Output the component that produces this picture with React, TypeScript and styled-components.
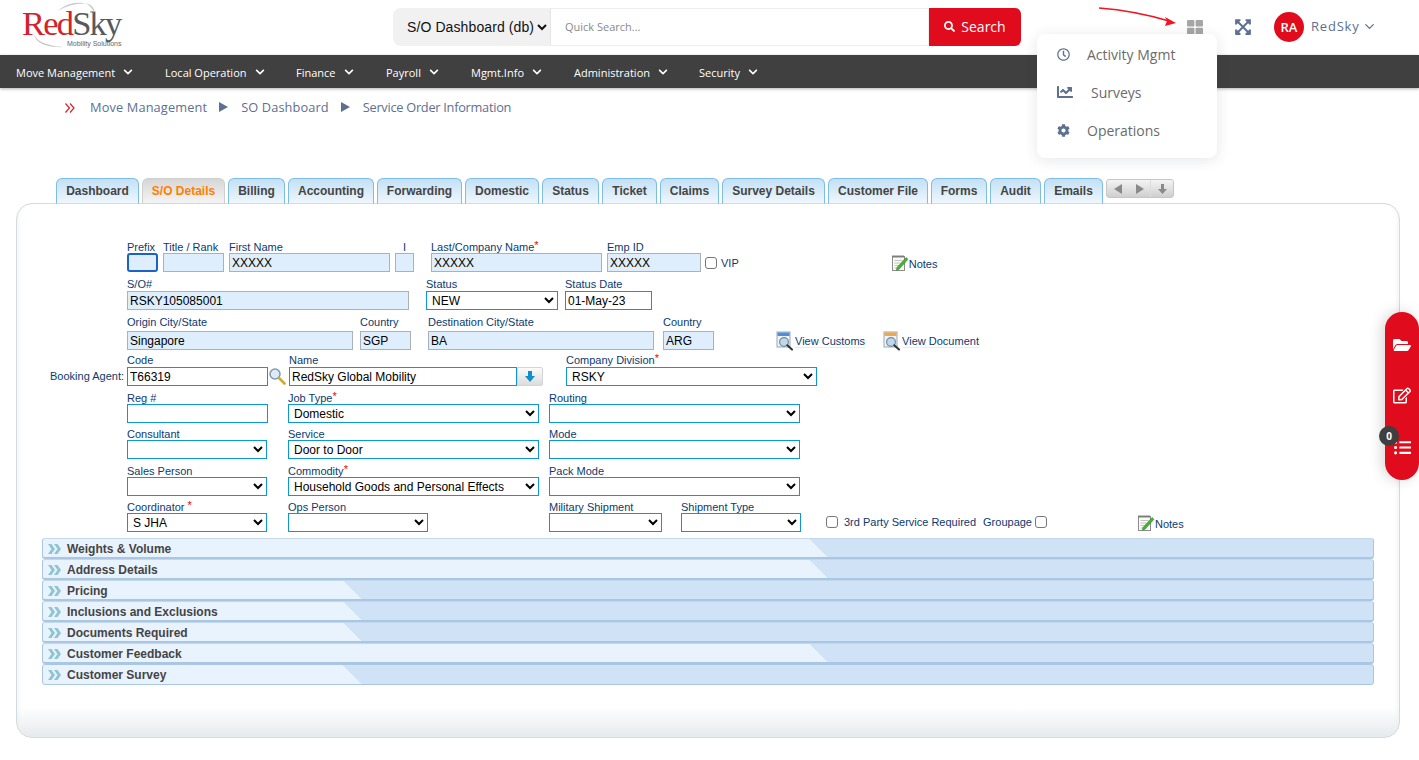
import React from 'react';
import styled, { createGlobalStyle } from 'styled-components';
import { FaChevronDown, FaChartLine, FaCog, FaExpandArrowsAlt, FaFolderOpen, FaListUl, FaRegClock, FaRegEdit, FaSearch } from 'react-icons/fa';
import { FiChevronDown } from 'react-icons/fi';

const Global = createGlobalStyle`
  html, body { margin: 0; padding: 0; background: #fff; }
  body { font-family: "Liberation Sans", Arial, sans-serif; overflow: hidden; }
  * { box-sizing: border-box; }
`;

const Page = styled.div`
  position: relative;
  width: 1419px;
  height: 760px;
  overflow: hidden;
  display: flex;
  flex-direction: column;
`;

/* ---------- header ---------- */
const Header = styled.header`
  height: 55px;
  display: flex;
  align-items: flex-start;
  flex: none;
`;
const Logo = styled.div`
  position: relative;
  width: 130px;
  height: 55px;
  margin-left: 22px;
  padding-top: 6px;
  flex: none;
`;
const LogoWord = styled.div`
  font-family: "Liberation Serif", "Times New Roman", serif;
  font-size: 34.5px;
  line-height: 34px;
  letter-spacing: -1.8px;
  color: #555a5e;
  white-space: nowrap;
`;
const LogoRed = styled.span`
  color: #d3222c;
`;
const LogoTag = styled.div`
  font-family: "Liberation Sans", sans-serif;
  font-size: 7px;
  line-height: 8px;
  color: #666;
  margin: 0 0 0 45px;
  white-space: nowrap;
`;
const Swoosh = styled.svg`
  position: absolute;
  left: -2px;
  top: 0;
`;
const SearchGroup = styled.form`
  display: flex;
  margin: 8px 0 0 241px;
  height: 38px;
  width: 628px;
  flex: none;
`;
const ScopeSelect = styled.select`
  width: 157px;
  height: 38px;
  border: none;
  border-radius: 8px 0 0 8px;
  background: #f1f1f1;
  font-family: "Liberation Sans", sans-serif;
  font-size: 14px;
  letter-spacing: 0.1px;
  color: #111;
  padding: 0 0 0 10px;
`;
const QuickInput = styled.input`
  width: 379px;
  height: 38px;
  border: 1px solid #eee;
  border-left: 1px solid #e4e4e4;
  padding: 0 0 2px 14px;
  font-family: "Open Sans", sans-serif;
  font-size: 11px;
  outline: none;
  &::placeholder { color: #8a8a8a; opacity: 1; }
`;
const SearchButton = styled.button`
  width: 92px;
  height: 38px;
  border: none;
  border-radius: 0 6px 6px 0;
  background: #e00b1c;
  color: #fff;
  display: flex;
  align-items: center;
  justify-content: center;
  gap: 6px;
  font-family: "Open Sans", sans-serif;
  font-size: 14px;
  font-weight: 500;
  padding: 0 0 1px;
`;
const HeaderRight = styled.div`
  display: flex;
  align-items: center;
  height: 30px;
  margin: 12px 0 0 166px;
  color: #5d7090;
`;
const GridIcon = styled.svg`
  margin-right: 31px;
  flex: none;
`;
const Avatar = styled.div`
  width: 30px;
  height: 30px;
  margin-left: 22px;
  border-radius: 50%;
  background: #e00b1c;
  color: #fff;
  font-family: "Open Sans", sans-serif;
  font-weight: 600;
  font-size: 13px;
  display: flex;
  align-items: center;
  justify-content: center;
`;
const UserName = styled.span`
  font-family: "Open Sans", sans-serif;
  font-size: 13px;
  letter-spacing: 0.8px;
  margin: 0 2px 0 7px;
  color: #5d7090;
  position: relative;
  top: -1px;
`;
const UserCaret = styled(FiChevronDown)`
  position: relative;
  top: -1px;
`;

const Menu = styled.div`
  position: absolute;
  left: 1037px;
  top: 34px;
  width: 180px;
  height: 124px;
  padding-top: 1px;
  border-radius: 8px;
  background: #fff;
  box-shadow: 0 2px 14px rgba(40, 50, 70, 0.12);
  z-index: 5;
`;
const MenuItem = styled.div<{ $gap: number }>`
  display: flex;
  align-items: center;
  height: 38px;
  padding-left: 20px;
  gap: ${(p) => p.$gap}px;
  color: #5d7090;
  font-family: "Open Sans", sans-serif;
  font-size: 14px;
`;
const MenuText = styled.span`
  color: #6b6b6b;
`;
const Arrow = styled.svg`
  position: absolute;
  left: 1095px;
  top: 3px;
  z-index: 6;
`;

/* ---------- nav ---------- */
const Nav = styled.nav`
  height: 33px;
  background: #404040;
  box-shadow: 0 1px 3px rgba(0, 0, 0, 0.3);
  display: flex;
  align-items: center;
  padding: 1px 0 0 16px;
  flex: none;
`;
const NavItem = styled.div<{ $w: number }>`
  width: ${(p) => p.$w}px;
  display: flex;
  align-items: center;
  gap: 8px;
  color: #fff;
  font-family: "Open Sans", sans-serif;
  font-size: 11px;
  font-weight: 500;
  white-space: nowrap;
`;

/* ---------- breadcrumb ---------- */
const Crumbs = styled.div`
  height: 90px;
  padding: 10px 0 0 65px;
  display: flex;
  align-items: flex-start;
  color: #5d7090;
  font-family: "Open Sans", sans-serif;
  font-size: 12.8px;
  line-height: 18px;
  flex: none;
`;
const Crumb = styled.span<{ $ls: number }>`
  letter-spacing: ${(p) => p.$ls}px;
  white-space: nowrap;
`;
const CrumbChevrons = styled.svg`
  margin: 5px 15px 0 0;
`;
const CrumbArrow = styled.svg`
  margin: 4px 13px 0 12px;
`;

/* ---------- tabs ---------- */
const TabBar = styled.div`
  display: flex;
  height: 26px;
  padding-left: 56px;
  gap: 3px;
  margin-bottom: -1px;
  position: relative;
  z-index: 1;
  flex: none;
`;
const Tab = styled.div<{ $w: number; $active?: boolean }>`
  width: ${(p) => p.$w}px;
  height: 26px;
  border: 1px solid ${(p) => (p.$active ? '#cfcfcf' : '#7dbde8')};
  border-bottom: 1px solid ${(p) => (p.$active ? '#d5d5d5' : '#d5dadd')};
  border-radius: 6px 6px 0 0;
  background: ${(p) =>
    p.$active
      ? 'linear-gradient(#d6d6d6, #f4f4f4)'
      : 'linear-gradient(#c3e0f5, #eff7fd)'};
  color: ${(p) => (p.$active ? '#ff7f00' : '#444')};
  font-size: 12px;
  font-weight: 700;
  display: flex;
  align-items: center;
  justify-content: center;
  white-space: nowrap;
`;
const TabArrows = styled.div`
  width: 68px;
  height: 19px;
  margin: 1px 0 0 0;
  border: 1px solid #c6c6c6;
  border-radius: 3px;
  background: linear-gradient(#f4f4f4, #cfcfcf);
  display: flex;
  align-items: center;
`;
const TabArrowCell = styled.div<{ $line?: boolean }>`
  flex: 1;
  height: 100%;
  display: flex;
  align-items: center;
  justify-content: center;
  border-left: ${(p) => (p.$line ? '1px solid #dcdcdc' : 'none')};
`;

/* ---------- panel ---------- */
const Panel = styled.main`
  width: 1384px;
  height: 535px;
  margin-left: 16px;
  padding-top: 37px;
  border: 1px solid #d5dadd;
  border-radius: 16px;
  background: linear-gradient(#fff calc(100% - 30px), #e6eaec 100%);
  box-shadow: inset 4px 0 4px -3px #eef0f1, inset -4px 0 4px -3px #eef0f1;
  flex: none;
`;
const Label = styled.label<{ $center?: boolean }>`
  display: block;
  font-size: 11px;
  line-height: 12px;
  color: #0b3a70;
  white-space: nowrap;
  text-align: ${(p) => (p.$center ? 'center' : 'left')};
`;
const Row = styled.div<{ $h: number; $lg?: number; $pl?: number }>`
  display: flex;
  align-items: flex-end;
  height: ${(p) => p.$h}px;
  padding-left: ${(p) => p.$pl ?? 110}px;
  ${Label} { margin-bottom: ${(p) => p.$lg ?? 0}px; }
`;
const Field = styled.div<{ $w: number; $ml?: number }>`
  width: ${(p) => p.$w}px;
  margin-left: ${(p) => p.$ml ?? 0}px;
  flex: none;
`;
const Star = styled.span`
  color: #e00;
  font-size: 11px;
  position: relative;
  top: -2px;
  line-height: 0;
`;
const Input = styled.input<{ $ro?: boolean; $focus?: boolean }>`
  display: block;
  width: 100%;
  height: 19px;
  padding: 0 2px;
  font-family: "Liberation Sans", sans-serif;
  font-size: 12px;
  color: #000;
  outline: none;
  background: ${(p) => (p.$ro ? '#deeefd' : '#fff')};
  border: ${(p) => (p.$focus ? '2px solid #1a62c8' : p.$ro ? '1px solid #a9b1b9' : '1px solid #0b99cf')};
  border-radius: ${(p) => (p.$focus ? '3px' : '0')};
`;
const Select = styled.select`
  display: block;
  width: 100%;
  height: 19px;
  padding: 0 1px;
  font-family: "Liberation Sans", sans-serif;
  font-size: 12px;
  color: #000;
  background: #fff;
  border: 1px solid #0b99cf;
  border-radius: 0;
  outline: none;
`;
const Inline = styled.div<{ $ml?: number; $mb?: number }>`
  display: flex;
  align-items: center;
  height: 19px;
  margin-left: ${(p) => p.$ml ?? 0}px;
  margin-bottom: ${(p) => p.$mb ?? 0}px;
  flex: none;
`;
const Check = styled.input.attrs({ type: 'checkbox' })<{ $ml?: number; $mr?: number }>`
  appearance: none;
  width: 12px;
  height: 12px;
  margin: 0 ${(p) => p.$mr ?? 0}px 0 ${(p) => p.$ml ?? 0}px;
  border: 1px solid #777;
  border-radius: 3px;
  background: #fff;
  flex: none;
`;
const Small = styled.span<{ $ml?: number }>`
  font-size: 11px;
  line-height: 12px;
  color: #0b3a70;
  margin-left: ${(p) => p.$ml ?? 0}px;
  white-space: nowrap;
`;
const NotesText = styled.span`
  font-size: 11px;
  line-height: 12px;
  color: #0b3a70;
  margin: 2px 0 0 0;
  white-space: nowrap;
`;
const IconLink = styled.span`
  font-size: 11px;
  line-height: 12px;
  color: #0b3a70;
  border-bottom: 1px solid #e6edf3;
  margin: 2px 0 0 1px;
  white-space: nowrap;
`;
const BookingLabel = styled.div`
  width: 77px;
  padding-right: 3px;
  height: 19px;
  line-height: 19px;
  font-size: 11px;
  color: #0b3a70;
  text-align: right;
  white-space: nowrap;
  flex: none;
`;
const Lookup = styled.svg`
  flex: none;
  margin-bottom: 1px;
`;
const DownButton = styled.div`
  width: 26px;
  height: 19px;
  flex: none;
  display: flex;
  align-items: center;
  justify-content: center;
  border: 1px solid #d4d4d4;
  border-radius: 0 2px 2px 0;
  background: linear-gradient(#fbfbfb, #dcdcdc);
`;
const Accordion = styled.section`
  width: 1332px;
  margin: 6px 0 0 25px;
`;
const Bar = styled.div<{ $cut: number; $last?: boolean }>`
  height: 21px;
  display: flex;
  align-items: center;
  gap: 6px;
  padding: ${(p) => (p.$last ? 0 : 1)}px 0 0 5px;
  border: 1px solid #a9c6e2;
  border-width: 1px 1px ${(p) => (p.$last ? 1 : 2)}px 1px;
  border-top-color: ${(p) => (p.$last ? '#a9c6e2' : '#c4d8ec')};
  border-radius: 3px;
  color: #444;
  font-size: 12px;
  font-weight: 700;
  background:
    linear-gradient(45deg, #e9f3fd 50%, #cfe2f6 50%) ${(p) => p.$cut}px 0 / 21px 100% no-repeat,
    linear-gradient(#cfe2f6, #cfe2f6) ${(p) => p.$cut + 21}px 0 / 100% 100% no-repeat,
    #e9f3fd;
`;

/* ---------- side rail ---------- */
const Rail = styled.aside`
  position: absolute;
  left: 1385px;
  top: 312px;
  width: 34px;
  height: 168px;
  border-radius: 17px;
  background: #e00b1c;
  color: #fff;
  box-shadow: -3px 0 14px rgba(0, 0, 0, 0.16);
  display: flex;
  flex-direction: column;
  align-items: center;
  padding: 24px 0 0 0;
  gap: 32px;
  z-index: 4;
`;
const RailIcon = styled.div<{ $mt?: number }>`
  width: 18px;
  height: 18px;
  margin-top: ${(p) => p.$mt ?? 0}px;
  display: flex;
  align-items: center;
  justify-content: center;
`;
const Badge = styled.div`
  position: absolute;
  left: -6px;
  top: 114px;
  width: 20px;
  height: 20px;
  border-radius: 50%;
  background: #3f3f3f;
  color: #fff;
  font-family: "Open Sans", sans-serif;
  font-size: 10px;
  font-weight: 700;
  display: flex;
  align-items: center;
  justify-content: center;
`;

/* ---------- drawn icons ---------- */
const NotesIcon = () => (
  <svg width="18" height="18" viewBox="0 0 18 18">
    <rect x="1.500" y="2.500" width="12" height="14" fill="#fbfbf4" stroke="#8c8c8c" />
    <path d="M2 1v3M4 1v3M6 1v3M8 1v3M10 1v3M12 1v3" stroke="#666" strokeWidth="0.8" />
    <path d="M3.500 6.500h8M3.500 9h6M3.500 11.500h5M3.500 14h6" stroke="#b5b5b5" strokeWidth="0.8" />
    <path d="M6 13.500 15 3.500l2 1.800-9 10-2.600.9z" fill="#45b135" stroke="#2b7d22" strokeWidth="0.5" />
  </svg>
);
const DocSearchIcon = ({ tint }: { tint: string }) => (
  <svg width="18" height="20" viewBox="0 0 18 20">
    <rect x="1" y="1" width="13" height="15" fill="#eef3f8" stroke="#9aa7b4" />
    <rect x="1.500" y="1.500" width="12" height="3.500" fill={tint} />
    <circle cx="8" cy="11" r="4.400" fill="#bcd9ef" stroke="#7a8a99" strokeWidth="1.2" />
    <path d="M11.300 14.200 16 18.600" stroke="#333" strokeWidth="2" strokeLinecap="round" />
  </svg>
);
const Chevrons = ({ color }: { color: string }) => (
  <svg width="13" height="10" viewBox="0 0 13 10">
    <path d="M0 0h3.500l3.500 5-3.500 5H0l3.500-5zM6 0h3.500l3.500 5-3.500 5H6l3.500-5z" fill={color} />
  </svg>
);

const tabs: [string, number][] = [
  ['Dashboard', 83], ['S/O Details', 83], ['Billing', 57], ['Accounting', 86], ['Forwarding', 85],
  ['Domestic', 74], ['Status', 57], ['Ticket', 55], ['Claims', 59], ['Survey Details', 103],
  ['Customer File', 100], ['Forms', 56], ['Audit', 51], ['Emails', 59],
];
const navItems: [string, number][] = [
  ['Move Management', 149], ['Local Operation', 131], ['Finance', 90], ['Payroll', 85],
  ['Mgmt.Info', 103], ['Administration', 125], ['Security', 80],
];
const bars: [string, number][] = [
  ['Weights & Volume', 765], ['Address Details', 765], ['Pricing', 299],
  ['Inclusions and Exclusions', 299], ['Documents Required', 299],
  ['Customer Feedback', 765], ['Customer Survey', 299],
];

const Sel = ({ value }: { value?: string }) => (
  <Select defaultValue={value ?? ''}>
    <option value={value ?? ''}>{value ?? ''}</option>
  </Select>
);

export default function App() {
  return (
    <Page>
      <Global />
      <Header>
        <Logo>
          <Swoosh width="110" height="50" viewBox="0 0 110 50">
            <path d="M38 11C46 3 58 1 66 4c-9-1-18 1-28 7z" fill="#c9c9c9" />
            <path d="M66 3c6 2 9 5 8 10-1-4-4-7-8-10z" fill="#c9c9c9" />
            <path d="M14 34c2 7 12 12 30 13-14 1-29-3-30-13z" fill="#c4c4c4" />
          </Swoosh>
          <LogoWord>
            <LogoRed>Red</LogoRed>Sky
          </LogoWord>
          <LogoTag>Mobility Solutions</LogoTag>
        </Logo>
        <SearchGroup>
          <ScopeSelect defaultValue="S/O Dashboard (db)">
            <option>S/O Dashboard (db)</option>
          </ScopeSelect>
          <QuickInput placeholder="Quick Search..." />
          <SearchButton type="button">
            <FaSearch size={11} />
            Search
          </SearchButton>
        </SearchGroup>
        <HeaderRight>
          <GridIcon width="16" height="16" viewBox="0 0 16 16">
            <rect x="0" y="1" width="7.400" height="6.600" rx="1" fill="#a6a6a6" />
            <rect x="8.600" y="1" width="7.400" height="6.600" rx="1" fill="#a6a6a6" />
            <rect x="0" y="8.800" width="7.400" height="6.600" rx="1" fill="#a6a6a6" />
            <rect x="8.600" y="8.800" width="7.400" height="6.600" rx="1" fill="#a6a6a6" />
          </GridIcon>
          <FaExpandArrowsAlt size={18} />
          <Avatar>RA</Avatar>
          <UserName>RedSky</UserName>
          <UserCaret size={15} />
        </HeaderRight>
      </Header>

      <Arrow width="90" height="26" viewBox="0 0 90 26">
        <path d="M4 5C30 7 54 12 74 18" fill="none" stroke="#f01520" strokeWidth="1.4" />
        <path d="M81 20 70 14l2 4-2 5z" fill="#f01520" />
      </Arrow>

      <Menu>
        <MenuItem $gap={17}>
          <FaRegClock size={13} />
          <MenuText>Activity Mgmt</MenuText>
        </MenuItem>
        <MenuItem $gap={18}>
          <FaChartLine size={16} />
          <MenuText>Surveys</MenuText>
        </MenuItem>
        <MenuItem $gap={17}>
          <FaCog size={13} />
          <MenuText>Operations</MenuText>
        </MenuItem>
      </Menu>

      <Nav>
        {navItems.map(([t, w]) => (
          <NavItem key={t} $w={w}>
            {t}
            <FaChevronDown size={10} />
          </NavItem>
        ))}
      </Nav>

      <Crumbs>
        <CrumbChevrons width="10" height="10" viewBox="0 0 10 10">
          <path d="M0.500 0.500 4.500 5l-4 4.500M5 0.500 9 5l-4 4.500" fill="none" stroke="#d3222c" strokeWidth="1.2" />
        </CrumbChevrons>
        <Crumb $ls={0.13}>Move Management</Crumb>
        <CrumbArrow width="9" height="10" viewBox="0 0 9 10">
          <path d="M0 0 9 5 0 10z" fill="#5d7090" />
        </CrumbArrow>
        <Crumb $ls={0.1}>SO Dashboard</Crumb>
        <CrumbArrow width="9" height="10" viewBox="0 0 9 10">
          <path d="M0 0 9 5 0 10z" fill="#5d7090" />
        </CrumbArrow>
        <Crumb $ls={-0.28}>Service Order Information</Crumb>
      </Crumbs>

      <TabBar>
        {tabs.map(([t, w]) => (
          <Tab key={t} $w={w} $active={t === 'S/O Details'}>
            {t}
          </Tab>
        ))}
        <TabArrows>
          <TabArrowCell>
            <svg width="8" height="10" viewBox="0 0 8 10"><path d="M8 0v10L0 5z" fill="#8a8a8a" /></svg>
          </TabArrowCell>
          <TabArrowCell>
            <svg width="8" height="10" viewBox="0 0 8 10"><path d="M0 0v10l8-5z" fill="#8a8a8a" /></svg>
          </TabArrowCell>
          <TabArrowCell $line>
            <svg width="9" height="10" viewBox="0 0 9 10"><path d="M3 0h3v5h3L4.500 10 0 5h3z" fill="#8a8a8a" /></svg>
          </TabArrowCell>
        </TabArrows>
      </TabBar>

      <Panel>
        <Row $h={31}>
          <Field $w={31}><Label>Prefix</Label><Input $focus $ro /></Field>
          <Field $w={61} $ml={5}><Label>Title / Rank</Label><Input $ro /></Field>
          <Field $w={161} $ml={5}><Label>First Name</Label><Input $ro defaultValue="XXXXX" /></Field>
          <Field $w={19} $ml={5}><Label $center>I</Label><Input $ro /></Field>
          <Field $w={171} $ml={17}><Label>Last/Company Name<Star>*</Star></Label><Input $ro defaultValue="XXXXX" /></Field>
          <Field $w={94} $ml={5}><Label>Emp ID</Label><Input $ro defaultValue="XXXXX" /></Field>
          <Inline $ml={4}>
            <Check $mr={4} />
            <Small>VIP</Small>
          </Inline>
          <Inline $ml={152}>
            <NotesIcon />
            <NotesText>Notes</NotesText>
          </Inline>
        </Row>
        <Row $h={38} $lg={1}>
          <Field $w={282}><Label>S/O#</Label><Input $ro defaultValue="RSKY105085001" /></Field>
          <Field $w={132} $ml={17}><Label>Status</Label><Sel value="NEW" /></Field>
          <Field $w={87} $ml={7}><Label>Status Date</Label><Input defaultValue="01-May-23" /></Field>
        </Row>
        <Row $h={40} $lg={3}>
          <Field $w={226}><Label>Origin City/State</Label><Input $ro defaultValue="Singapore" /></Field>
          <Field $w={51} $ml={7}><Label>Country</Label><Input $ro defaultValue="SGP" /></Field>
          <Field $w={226} $ml={17}><Label>Destination City/State</Label><Input $ro defaultValue="BA" /></Field>
          <Field $w={51} $ml={9}><Label>Country</Label><Input $ro defaultValue="ARG" /></Field>
          <Inline $ml={62}>
            <DocSearchIcon tint="#4f8fd0" />
            <IconLink>View Customs</IconLink>
          </Inline>
          <Inline $ml={18}>
            <DocSearchIcon tint="#f0a64a" />
            <IconLink>View Document</IconLink>
          </Inline>
        </Row>
        <Row $h={36} $lg={1} $pl={33}>
          <BookingLabel>Booking Agent:</BookingLabel>
          <Field $w={141}><Label>Code</Label><Input defaultValue="T66319" /></Field>
          <Lookup width="18" height="18" viewBox="0 0 18 18">
            <circle cx="7" cy="7" r="5" fill="#dcebf7" stroke="#7d9bb0" strokeWidth="1.5" />
            <path d="M11 11l5.500 5.500" stroke="#c9a93a" strokeWidth="2.6" strokeLinecap="round" />
          </Lookup>
          <Field $w={228} $ml={3}><Label>Name</Label><Input defaultValue="RedSky Global Mobility" /></Field>
          <DownButton>
            <svg width="10" height="11" viewBox="0 0 10 11"><path d="M3 0h4v5h3L5 11 0 5h3z" fill="#0f8fd0" /></svg>
          </DownButton>
          <Field $w={251} $ml={23}><Label>Company Division<Star>*</Star></Label><Sel value="RSKY" /></Field>
        </Row>
        <Row $h={37}>
          <Field $w={141}><Label>Reg #</Label><Input /></Field>
          <Field $w={251} $ml={20}><Label>Job Type<Star>*</Star></Label><Sel value="Domestic" /></Field>
          <Field $w={251} $ml={10}><Label>Routing</Label><Sel /></Field>
        </Row>
        <Row $h={36}>
          <Field $w={140}><Label>Consultant</Label><Sel /></Field>
          <Field $w={251} $ml={21}><Label>Service</Label><Sel value="Door to Door" /></Field>
          <Field $w={251} $ml={10}><Label>Mode</Label><Sel /></Field>
        </Row>
        <Row $h={37}>
          <Field $w={140}><Label>Sales Person</Label><Sel /></Field>
          <Field $w={251} $ml={21}><Label>Commodity<Star>*</Star></Label><Sel value="Household Goods and Personal Effects" /></Field>
          <Field $w={251} $ml={10}><Label>Pack Mode</Label><Sel /></Field>
        </Row>
        <Row $h={36}>
          <Field $w={140}><Label>Coordinator <Star>*</Star></Label><Sel value="S JHA" /></Field>
          <Field $w={140} $ml={21}><Label>Ops Person</Label><Sel /></Field>
          <Field $w={113} $ml={121}><Label>Military Shipment</Label><Sel /></Field>
          <Field $w={120} $ml={19}><Label>Shipment Type</Label><Sel /></Field>
          <Inline $ml={25} $mb={1}>
            <Check $mr={6} />
            <Small>3rd Party Service Required</Small>
            <Small $ml={7}>Groupage</Small>
            <Check $ml={3} />
          </Inline>
          <Inline $ml={90}>
            <NotesIcon />
            <NotesText>Notes</NotesText>
          </Inline>
        </Row>
        <Accordion>
          {bars.map(([t, c], i) => (
            <Bar key={t} $cut={c} $last={i === bars.length - 1}>
              <Chevrons color="#8fc5d3" />
              {t}
            </Bar>
          ))}
        </Accordion>
      </Panel>

      <Rail>
        <RailIcon><FaFolderOpen size={18} /></RailIcon>
        <RailIcon><FaRegEdit size={19} /></RailIcon>
        <RailIcon $mt={2}><FaListUl size={17} /></RailIcon>
        <Badge>0</Badge>
      </Rail>
    </Page>
  );
}
